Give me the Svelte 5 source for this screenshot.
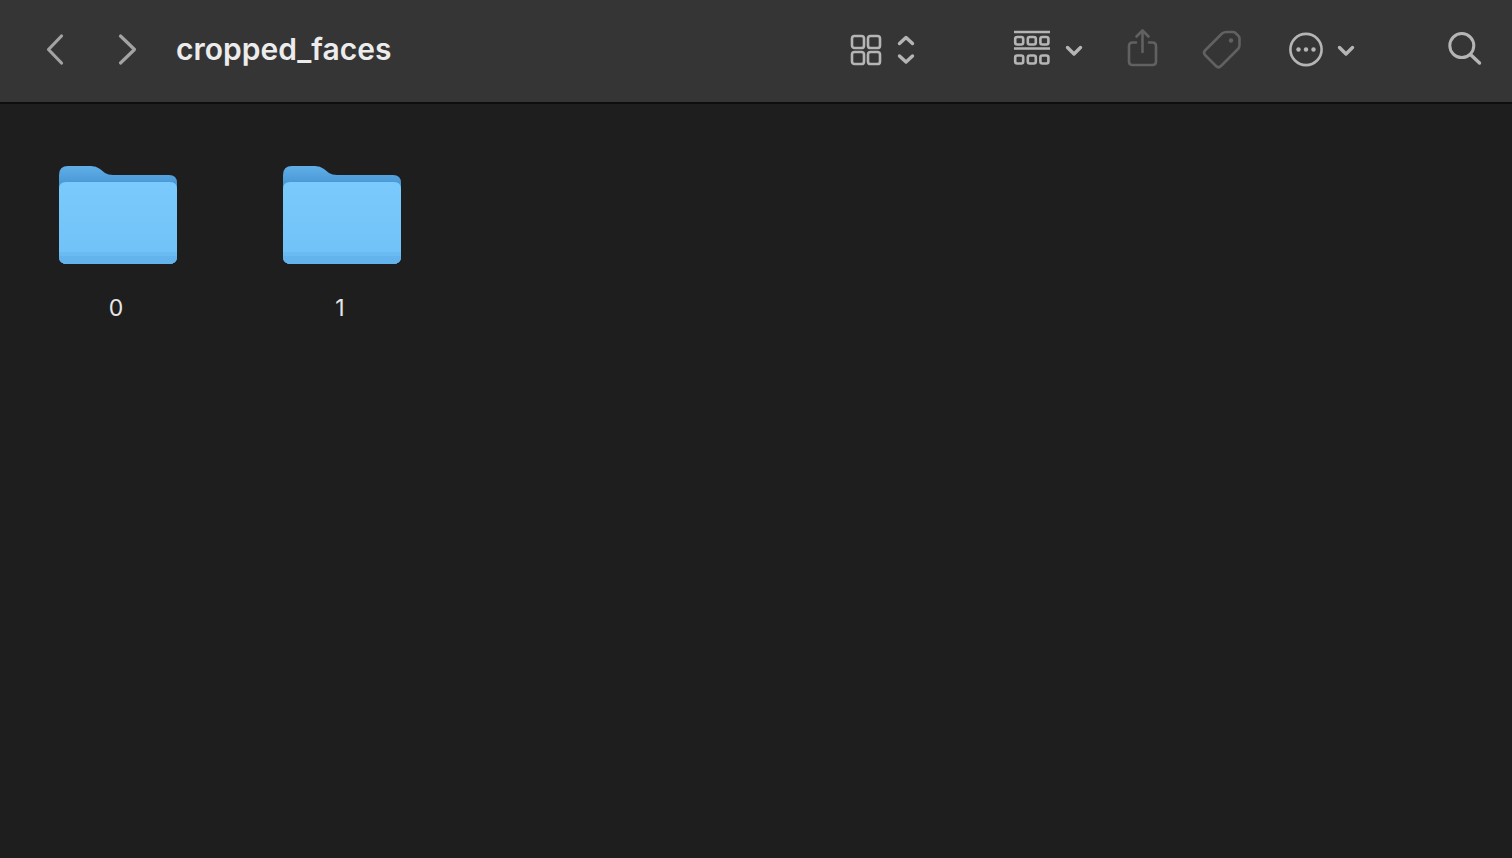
<script>
  const folders = ['0', '1'];
</script>

{#snippet chevronDown()}
  <path d="M1.5 1.5 L8 8 L14.5 1.5" />
{/snippet}

<div class="window">
  <header class="toolbar">
    <svg class="nav" width="24" height="44" viewBox="0 0 24 44" aria-hidden="true">
      <path class="s2 mid" d="M17.5 8 L4.5 21.5 L17.5 35" />
    </svg>
    <svg class="nav fwd" width="24" height="44" viewBox="0 0 24 44" aria-hidden="true">
      <path class="s2 mid" d="M4.5 8 L18.5 21.5 L4.5 35" />
    </svg>
    <h1 class="title">cropped_faces</h1>

    <div class="actions">
      <svg width="70" height="44" viewBox="0 0 70 44" aria-hidden="true">
        <g class="s2 light">
          <rect x="4" y="8" width="12" height="12" rx="2.6" />
          <rect x="20" y="8" width="12" height="12" rx="2.6" />
          <rect x="4" y="24" width="12" height="12" rx="2.6" />
          <rect x="20" y="24" width="12" height="12" rx="2.6" />
        </g>
        <path class="s3 light" d="M51.5 15.5 L58 9.5 L64.5 15.5 M51.5 28 L58 34 L64.5 28" />
      </svg>

      <svg class="group" width="76" height="44" viewBox="0 0 76 44" aria-hidden="true">
        <g class="s2 light">
          <path class="butt" d="M4 4 H40 M4 20.5 H40" />
          <rect x="5.2" y="9" width="8" height="7.5" rx="2" />
          <rect x="17.8" y="9" width="8" height="7.5" rx="2" />
          <rect x="30.4" y="9" width="8" height="7.5" rx="2" />
          <rect x="5.2" y="27.5" width="8" height="8" rx="2" />
          <rect x="17.8" y="27.5" width="8" height="8" rx="2" />
          <rect x="30.4" y="27.5" width="8" height="8" rx="2" />
        </g>
        <g class="s3 light" transform="translate(56 18)">{@render chevronDown()}</g>
      </svg>

      <svg class="share" width="36" height="44" viewBox="0 0 36 44" aria-hidden="true">
        <g class="s2 dim">
          <path d="M12 14.5 H8.5 Q5 14.5 5 18 V33.5 Q5 37 8.5 37 H28.5 Q32 37 32 33.5 V18 Q32 14.5 28.5 14.5 H25" />
          <path d="M18.5 3 V24 M12.5 8.5 L18.5 2.5 L24.5 8.5" />
        </g>
      </svg>

      <svg class="tag" width="44" height="44" viewBox="0 0 44 44" aria-hidden="true">
        <path class="s2 dim" d="M26.5 4 H33 Q34.5 4 35.5 5 L38.5 8 Q39.5 9 39.5 10.5 V17 Q39.5 19.5 38 21 L21 38 Q18.5 40.5 16 38 L5 27 Q3 24.5 5 22.5 L22 5.5 Q24 4 26.5 4 Z" />
        <circle class="dot-dim" cx="31" cy="12.5" r="2.2" />
      </svg>

      <svg class="more" width="72" height="44" viewBox="0 0 72 44" aria-hidden="true">
        <circle class="s2 light" cx="20" cy="21.5" r="15.6" />
        <circle class="dot" cx="12.5" cy="21.5" r="2.2" />
        <circle class="dot" cx="20" cy="21.5" r="2.2" />
        <circle class="dot" cx="27.5" cy="21.5" r="2.2" />
        <g class="s3 light" transform="translate(52 18)">{@render chevronDown()}</g>
      </svg>

      <svg class="search" width="38" height="44" viewBox="0 0 38 44" aria-hidden="true">
        <circle class="s3 ring" cx="15.8" cy="17.6" r="12" />
        <path class="s3 light" d="M24.5 26.5 L33.5 35" />
      </svg>
    </div>
  </header>

  <main class="content">
    {#each folders as name}
      <div class="item">
        <svg class="folder" width="118" height="99" viewBox="0 0 118 99" aria-hidden="true">
          <defs>
            <linearGradient id="front-{name}" x1="0" y1="0" x2="0" y2="1">
              <stop offset="0" stop-color="#7acafd" />
              <stop offset="1" stop-color="#70c1f6" />
            </linearGradient>
            <linearGradient id="back-{name}" x1="0" y1="0" x2="0" y2="1">
              <stop offset="0" stop-color="#60afe8" />
              <stop offset="0.5" stop-color="#4795d3" />
            </linearGradient>
          </defs>
          <path fill="url(#back-{name})" d="M0 10 Q0 1 9 1 H32 Q37 1 41 4 L46 8 Q49 10 54 10 H110 Q118 10 118 18 V40 H0 Z" />
          <path fill="url(#front-{name})" d="M0 24 Q0 17 7 17 H111 Q118 17 118 24 V91 Q118 99 110 99 H8 Q0 99 0 91 Z" />
          <path fill="#6abbf2" d="M0 87 H118 V91 Q118 99 110 99 H8 Q0 99 0 91 Z" />
          <path fill="#63b3ec" d="M0 91 H118 Q118 99 110 99 H8 Q0 99 0 91 Z" />
        </svg>
        <span class="label">{name}</span>
      </div>
    {/each}
  </main>
</div>

<style>
  :global(body) {
    margin: 0;
    background: #1e1e1e;
  }

  .window {
    height: 858px;
    overflow: hidden;
    background: #1e1e1e;
    font-family: Inter, "Liberation Sans", sans-serif;
  }

  .toolbar {
    box-sizing: border-box;
    height: 104px;
    display: flex;
    align-items: flex-start;
    padding: 28px 28px 0 44px;
    background: #353535;
    border-bottom: 2px solid #0e0e0e;
  }

  .toolbar svg {
    display: block;
    flex: none;
  }

  .fwd { margin-left: 48px; }

  .title {
    margin: 0 0 0 36px;
    font-size: 30px;
    font-weight: 600;
    line-height: 42px;
    color: #ececec;
  }

  .actions {
    display: flex;
    margin-left: auto;
  }

  .group { margin-left: 92px; }
  .share { margin-left: 38px; }
  .tag { margin-left: 40px; }
  .more { margin-left: 42px; }
  .search { margin-left: 88px; }

  .s2, .s3 {
    fill: none;
    stroke-linecap: round;
    stroke-linejoin: round;
  }
  .s2 { stroke-width: 2.6px; }
  .s3 { stroke-width: 3.4px; }
  .s2.mid { stroke: #a3a3a3; stroke-width: 3.2px; }
  .butt { stroke-linecap: butt; }
  .light { stroke: #b5b5b5; }
  .ring { stroke: #b5b5b5; stroke-width: 3px; }
  .dim { stroke: #616161; }
  .dot { fill: #b5b5b5; }
  .dot-dim { fill: #616161; }

  .content {
    display: grid;
    grid-template-columns: repeat(auto-fill, 224px);
    padding: 61px 0 0 6px;
  }

  .item {
    display: flex;
    flex-direction: column;
    align-items: center;
  }

  .folder { display: block; }

  .label {
    margin-top: 28px;
    padding-right: 4px;
    font-size: 23px;
    line-height: 32px;
    color: #e6e6e6;
  }
</style>
